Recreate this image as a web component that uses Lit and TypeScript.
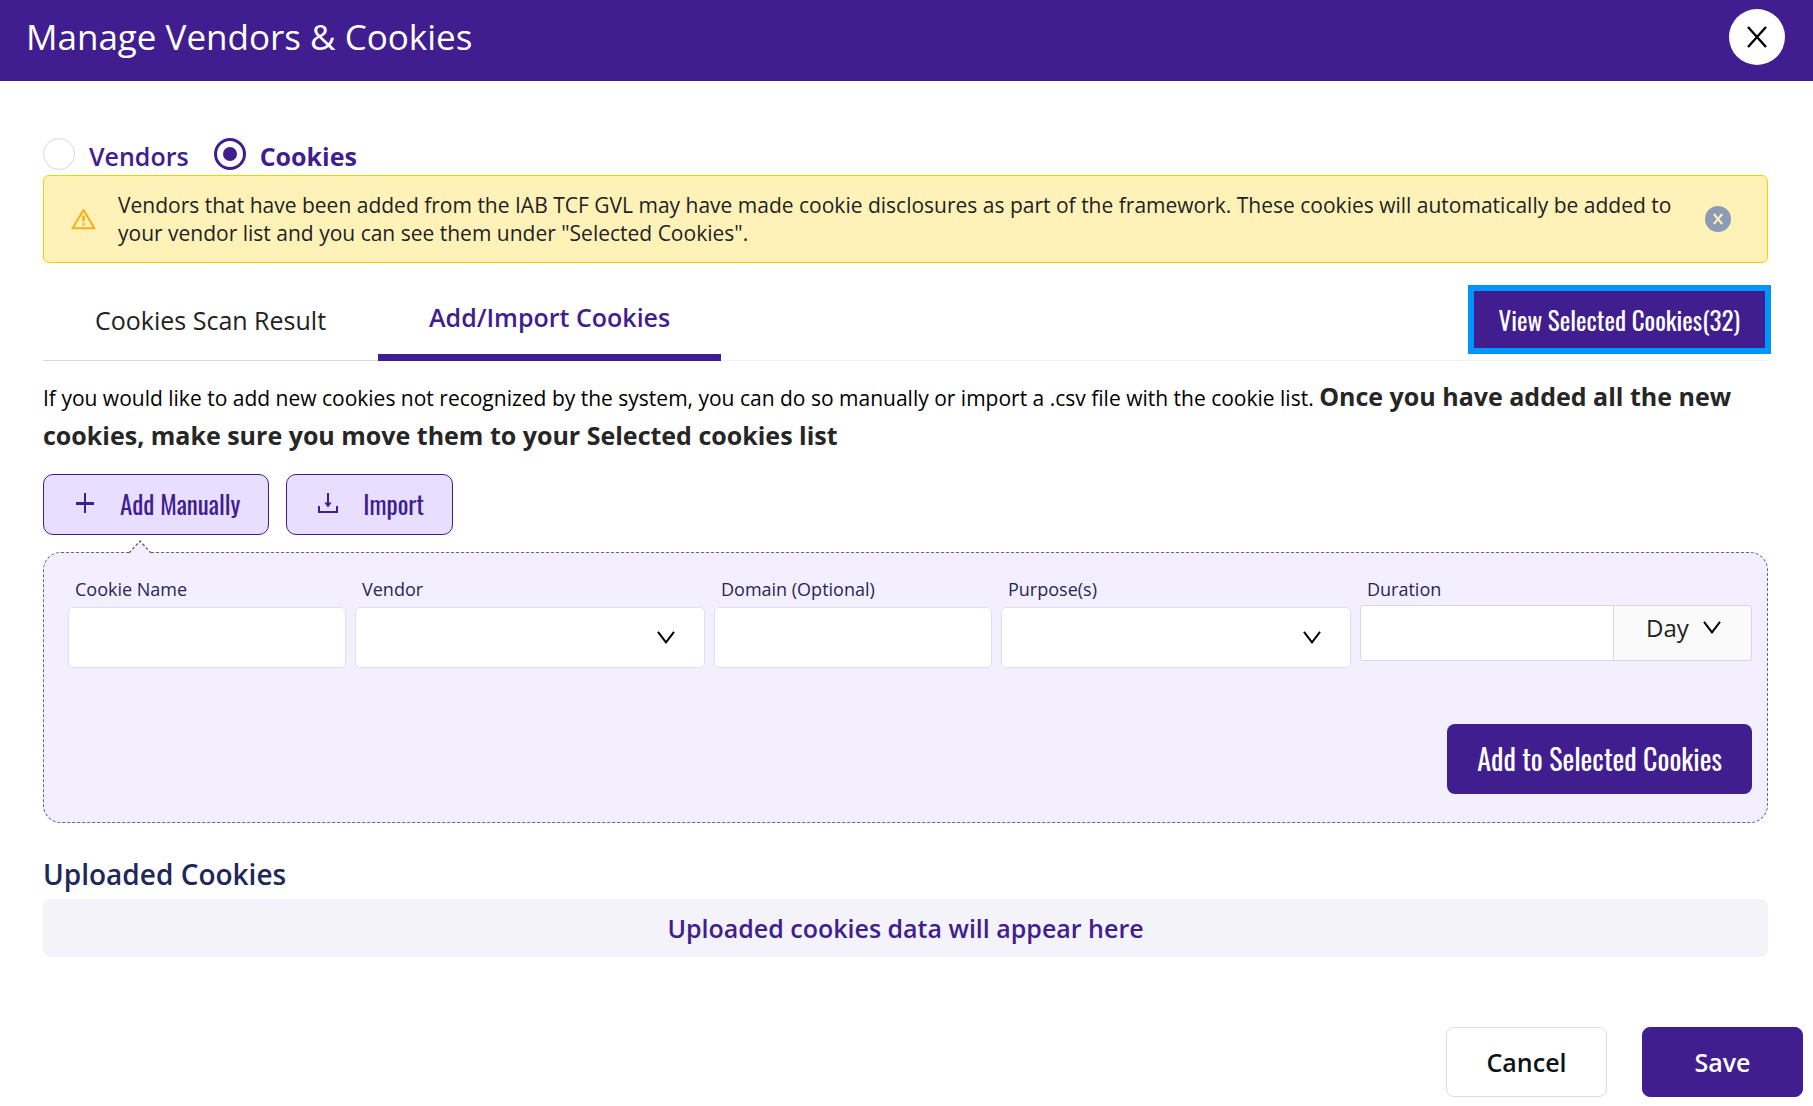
import { LitElement, html, css } from "lit";
import { customElement, state } from "lit/decorators.js";

const chevron = html`<svg class="chevron" width="18" height="13" viewBox="0 0 18 13" aria-hidden="true">
  <path d="M1 0.8 L9 11.4 L17 0.8" fill="none" stroke="#000" stroke-width="2" />
</svg>`;

@customElement("app-root")
export class AppRoot extends LitElement {
  @state() private mode = "cookies";

  static styles = css`
    :host {
      display: block;
      min-height: 100vh;
      background: #fff;
      color: #222;
      font-family: "Open Sans", sans-serif;
      font-size: 21px;
      --brand: #411e8f;
      --condensed: Oswald, "Open Sans", sans-serif;
    }
    *,
    *::before,
    *::after {
      box-sizing: border-box;
    }
    button,
    input,
    select {
      font: inherit;
      color: inherit;
      margin: 0;
    }
    button {
      padding: 0;
      border: 0;
      cursor: pointer;
    }
    svg {
      display: block;
      flex: none;
    }
    .header {
      display: flex;
      align-items: center;
      justify-content: space-between;
      padding: 9px 28px 16px 26px;
      background: var(--brand);
    }
    .title {
      margin: 0;
      color: #fff;
      font-size: 35px;
      line-height: 56px;
      font-weight: 400;
    }
    .close {
      display: grid;
      place-items: center;
      width: 56px;
      height: 56px;
      border-radius: 50%;
      background: #fff;
    }
    .body {
      padding: 57px 45px 0 43px;
    }
    .modes {
      display: flex;
      gap: 25px;
      margin: 0;
      padding: 0;
      border: 0;
      height: 37px;
    }
    .mode {
      display: flex;
      gap: 14px;
      color: var(--brand);
      font-size: 25px;
      line-height: 36px;
      font-weight: 600;
    }
    .mode input {
      appearance: none;
      display: grid;
      place-items: center;
      width: 32px;
      height: 32px;
      border: 1px solid #d9d9d9;
      border-radius: 50%;
      background: #fff;
    }
    .mode input:checked {
      border: 3px solid var(--brand);
    }
    .mode input:checked::before {
      content: "";
      width: 14px;
      height: 14px;
      border-radius: 50%;
      background: var(--brand);
    }
    .mode.on {
      font-weight: 700;
    }
    .notice {
      display: flex;
      align-items: center;
      padding: 15px 36px 15px 27px;
      border: 1px solid #fc0;
      border-radius: 6px;
      background: #fff2b8;
      line-height: 28px;
    }
    .notice p {
      flex: 1;
      margin: 0 32px 0 22px;
    }
    .dismiss {
      display: grid;
      place-items: center;
      width: 26px;
      height: 26px;
      border-radius: 50%;
      background: #8c9ab5;
    }
    .tabs {
      display: flex;
      align-items: stretch;
      height: 98px;
      border-bottom: 1px solid #f0f0f0;
    }
    .tab {
      margin-bottom: -1px;
      padding: 16px 52px 0;
      background: none;
      font-size: 25px;
      border-bottom: 1px solid #d9d9d9;
    }
    .tab.on {
      padding: 16px 51px 0;
      border-bottom: 7px solid var(--brand);
      color: var(--brand);
      font-weight: 600;
    }
    .view {
      margin: 28px 3px 0 auto;
      padding: 0 25px;
      height: 57px;
      outline: 6px solid #0095ff;
      background: var(--brand);
      color: #fff;
      font-family: var(--condensed);
      font-size: 25px;
    }
    .intro {
      margin: 18px 0 0;
      color: #000;
      line-height: 39px;
    }
    .intro strong {
      color: #262626;
      font-size: 25px;
      line-height: 1;
    }
    .actions {
      display: flex;
      gap: 17px;
      margin-top: 17px;
    }
    .action {
      display: flex;
      align-items: center;
      gap: 24px;
      height: 61px;
      padding: 0 28px 3px 30px;
      border: 1px solid var(--brand);
      border-radius: 10px;
      background: #e8deff;
      color: var(--brand);
      font-family: var(--condensed);
      font-size: 25px;
    }
    .panel {
      position: relative;
      margin-top: 17px;
      padding: 22px 15px 28px 24px;
      border: 1px dashed #6a5aae;
      border-radius: 18px;
      background: #f4efff;
    }
    .pointer {
      position: absolute;
      top: -13px;
      left: 84px;
    }
    .fields {
      display: grid;
      grid-template-columns: 278fr 350fr 278fr 350fr 392fr;
      gap: 9px;
      align-items: start;
    }
    .field {
      min-width: 0;
    }
    .field label {
      display: block;
      margin-bottom: 4px;
      padding: 0 7px;
      color: #1f2858;
      font-size: 18px;
      line-height: 28px;
    }
    .field label.tight {
      margin-bottom: 2px;
    }
    .box {
      display: block;
      width: 100%;
      height: 61px;
      padding: 0 12px;
      border: 1px solid #d8e4ec;
      border-radius: 5px;
      background: #fff;
      appearance: none;
    }
    .pick {
      display: grid;
      align-items: center;
    }
    .pick > * {
      grid-area: 1 / 1;
    }
    .pick .chevron {
      justify-self: end;
      margin-right: 30px;
      pointer-events: none;
    }
    .duration {
      display: flex;
      height: 56px;
      border: 1px solid #d9d9d9;
      border-radius: 3px;
      background: #fafafa;
      overflow: hidden;
    }
    .duration input {
      flex: 1;
      min-width: 0;
      border: 0;
      border-right: 1px solid #d9d9d9;
      background: #fff;
    }
    .unit {
      width: 137px;
      padding-bottom: 12px;
    }
    .unit select {
      width: 100%;
      height: 100%;
      padding: 0 0 0 32px;
      border: 0;
      background: transparent;
      appearance: none;
      font-size: 24px;
    }
    .submit {
      display: block;
      height: 70px;
      margin: 56px 0 0 auto;
      padding: 0 30px 1px;
      border-radius: 8px;
      background: var(--brand);
      color: #fff;
      font-family: var(--condensed);
      font-size: 28px;
    }
    .uploaded {
      margin: 31px 0 5px;
      color: #1f2858;
      font-size: 28px;
      line-height: 40px;
      font-weight: 600;
    }
    .empty {
      margin: 0;
      border-radius: 8px;
      background: #f4f3f9;
      color: var(--brand);
      font-size: 25px;
      line-height: 58px;
      font-weight: 600;
      text-align: center;
    }
    .footer {
      display: flex;
      justify-content: flex-end;
      gap: 35px;
      padding: 70px 10px 10px;
    }
    .footer button {
      min-width: 161px;
      height: 70px;
      border: 1px solid #d8dde9;
      border-radius: 8px;
      background: #fff;
      color: #0b1418;
      font-size: 25px;
      font-weight: 600;
    }
    .footer .save {
      border-color: var(--brand);
      background: var(--brand);
      color: #fff;
    }
  `;

  private modeOption(value: string, label: string) {
    const on = this.mode === value;
    return html`<label class="mode ${on ? "on" : ""}">
      <input type="radio" name="mode" .value=${value} .checked=${on} @change=${() => (this.mode = value)} />
      ${label}
    </label>`;
  }

  render() {
    return html`
      <header class="header">
        <h1 class="title">Manage Vendors &amp; Cookies</h1>
        <button class="close" aria-label="Close">
          <svg width="20" height="22" viewBox="0 0 20 22">
            <path d="M1 1 L19 21 M19 1 L1 21" fill="none" stroke="#000" stroke-width="2.4" />
          </svg>
        </button>
      </header>
      <main class="body">
        <fieldset class="modes" aria-label="List type">
          ${this.modeOption("vendors", "Vendors")} ${this.modeOption("cookies", "Cookies")}
        </fieldset>
        <div class="notice" role="alert">
          <svg width="25" height="22" viewBox="0 0 25 22" aria-hidden="true">
            <path d="M12.5 2 L23.4 20.2 H1.6 Z" fill="none" stroke="#faad14" stroke-width="2" stroke-linejoin="round" />
            <path d="M12.5 7.5 V13.4 M12.5 15.2 V17.6" stroke="#faad14" stroke-width="2.4" />
          </svg>
          <p>
            Vendors that have been added from the IAB TCF GVL may have made cookie disclosures as part of the framework.
            These cookies will automatically be added to your vendor list and you can see them under "Selected Cookies".
          </p>
          <button class="dismiss" aria-label="Dismiss">
            <svg width="10" height="12" viewBox="0 0 10 12">
              <path d="M0.8 1 L9.2 11 M9.2 1 L0.8 11" fill="none" stroke="#fff2b8" stroke-width="2" />
            </svg>
          </button>
        </div>
        <div class="tabs" role="tablist">
          <button class="tab" role="tab" aria-selected="false">Cookies Scan Result</button>
          <button class="tab on" role="tab" aria-selected="true">Add/Import Cookies</button>
          <button class="view">View Selected Cookies(32)</button>
        </div>
        <p class="intro">
          If you would like to add new cookies not recognized by the system, you can do so manually or import a .csv
          file with the cookie list.
          <strong>Once you have added all the new cookies, make sure you move them to your Selected cookies list</strong>
        </p>
        <div class="actions">
          <button class="action">
            <svg width="22" height="22" viewBox="0 0 22 22" aria-hidden="true">
              <path d="M11 1 V21" fill="none" stroke="#411e8f" stroke-width="2" />
              <path d="M2 11.5 H20" fill="none" stroke="#411e8f" stroke-width="3" />
            </svg>
            Add Manually
          </button>
          <button class="action">
            <svg width="22" height="22" viewBox="0 0 22 22" aria-hidden="true">
              <path d="M2 14 V20 H20 V14 M11 1 V12" fill="none" stroke="#411e8f" stroke-width="2" />
              <path d="M7.4 10.4 H14.6 L11 15.4 Z" fill="#411e8f" />
            </svg>
            Import
          </button>
        </div>
        <section class="panel" aria-label="Add cookie manually">
          <svg class="pointer" width="24" height="14" viewBox="0 0 24 14" aria-hidden="true">
            <path d="M1 14 L12 1 L23 14 Z" fill="#f4efff" />
            <path d="M1 13 L12 1 L23 13" fill="none" stroke="#6a5aae" stroke-width="1.4" stroke-dasharray="3 2" />
          </svg>
          <div class="fields">
            <div class="field">
              <label for="name">Cookie Name</label>
              <input class="box" id="name" type="text" />
            </div>
            <div class="field">
              <label for="vendor">Vendor</label>
              <div class="pick"><select class="box" id="vendor"></select>${chevron}</div>
            </div>
            <div class="field">
              <label for="domain">Domain (Optional)</label>
              <input class="box" id="domain" type="text" />
            </div>
            <div class="field">
              <label for="purpose">Purpose(s)</label>
              <div class="pick"><select class="box" id="purpose"></select>${chevron}</div>
            </div>
            <div class="field">
              <label class="tight" for="duration">Duration</label>
              <div class="duration">
                <input id="duration" type="text" />
                <div class="pick unit">
                  <select aria-label="Duration unit">
                    <option>Day</option>
                  </select>
                  ${chevron}
                </div>
              </div>
            </div>
          </div>
          <button class="submit">Add to Selected Cookies</button>
        </section>
        <h2 class="uploaded">Uploaded Cookies</h2>
        <p class="empty">Uploaded cookies data will appear here</p>
      </main>
      <footer class="footer">
        <button>Cancel</button>
        <button class="save">Save</button>
      </footer>
    `;
  }
}
